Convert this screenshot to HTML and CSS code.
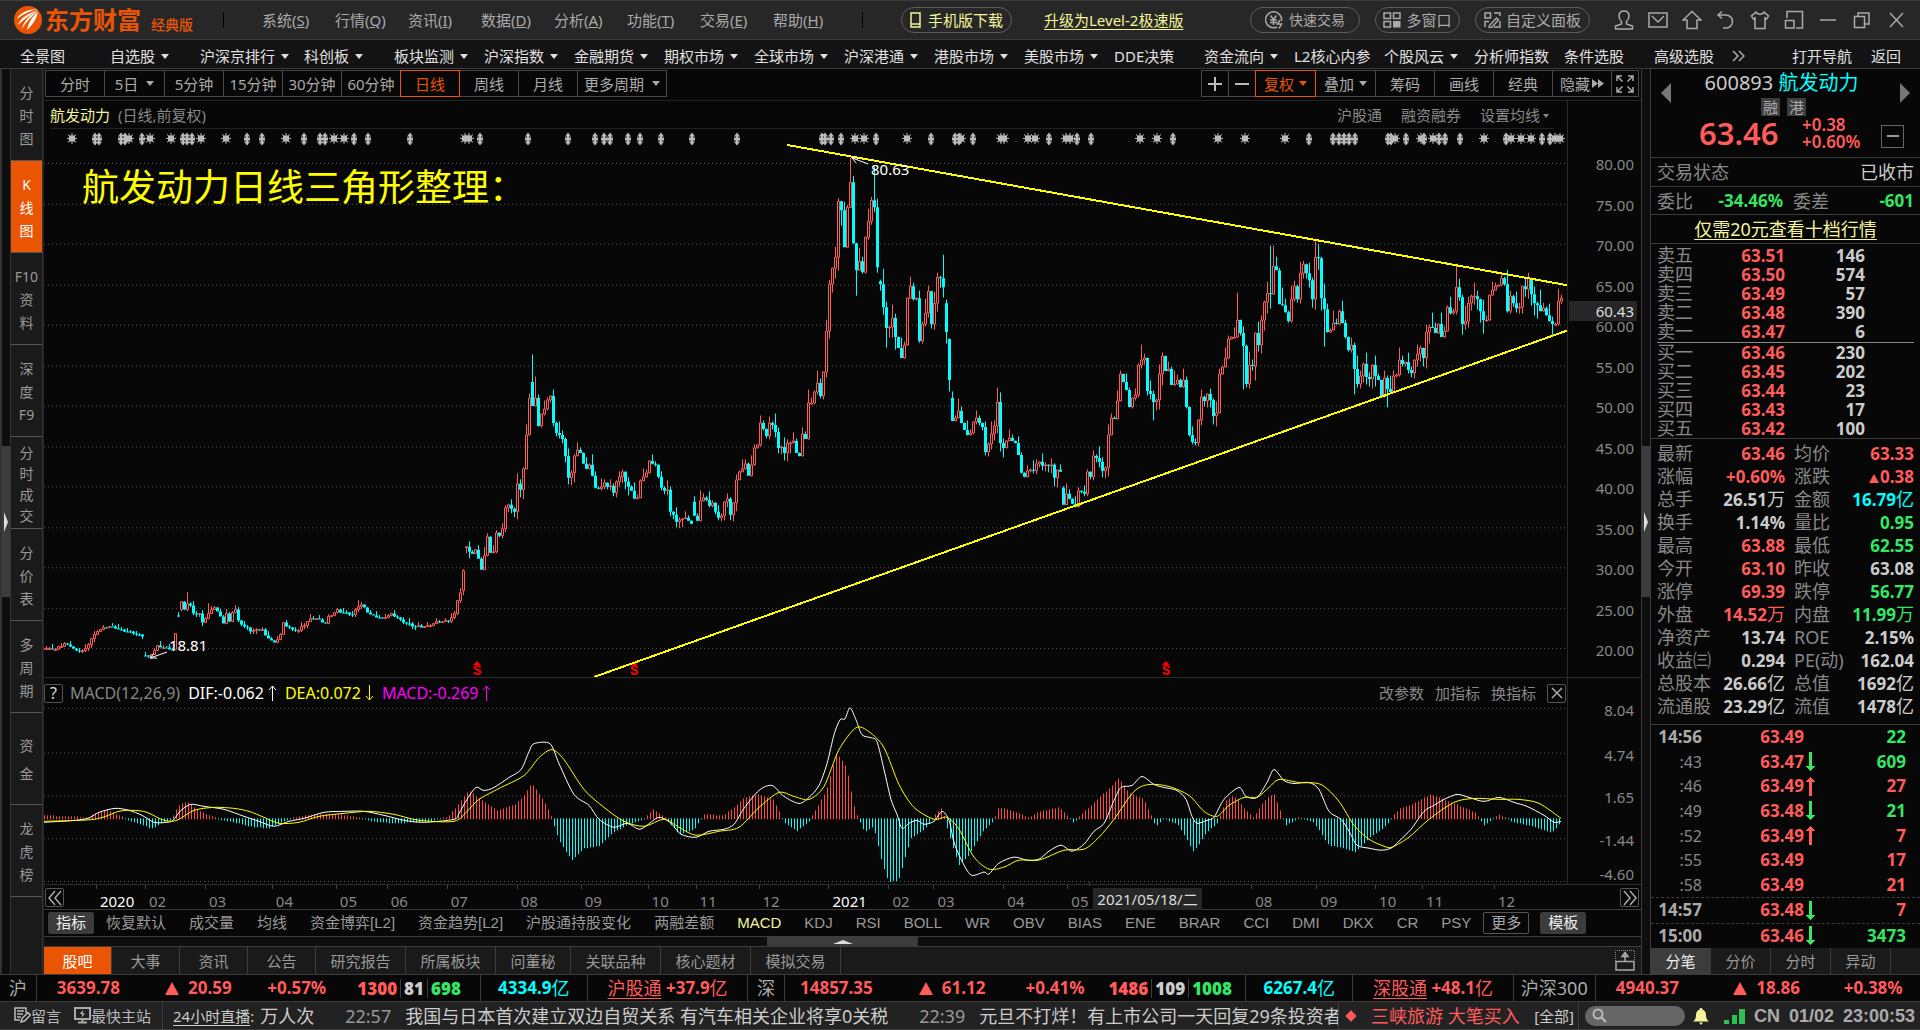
FILE: index.html
```html
<!DOCTYPE html>
<html lang="zh-CN">
<head>
<meta charset="utf-8">
<title>东方财富 经典版</title>
<link rel="stylesheet" href="styles.css">
</head>
<body>
<div class="app">
  <header class="titlebar">
    <div class="brand">
      <svg class="brand-mark" viewBox="0 0 28 28"><circle cx="14" cy="14" r="14" fill="#ea5504"/><path d="M24 3C15 3 5 7 3 13c5-4 12-8 21-10zM24 4C15 7 6 12 4 19c5-5 12-10 20-15zM24 5c-8 4-14 9-16 18 3-6 9-12 16-18zM24 6c-5 4-9 9-11 18 4-4 9-9 11-18z" fill="#fff"/></svg>
      <strong class="brand-name">东方财富</strong><span class="brand-edition">经典版</span>
    </div>
    <i class="bar-divider"></i>
    <div class="menus">
      <button>系统(<u>S</u>)</button><button>行情(<u>Q</u>)</button><button>资讯(<u>I</u>)</button><button>数据(<u>D</u>)</button><button>分析(<u>A</u>)</button><button>功能(<u>T</u>)</button><button>交易(<u>E</u>)</button><button>帮助(<u>H</u>)</button>
    </div>
    <i class="bar-divider"></i>
    <button class="pill pill-mobile"><svg width="11" height="16" viewBox="0 0 11 16"><path d="M1 1h9v14H1zM1 12h9" class="ln"/></svg>手机版下载</button>
    <a class="upgrade" href="#">升级为Level-2极速版</a>
    <div class="pills">
      <button class="pill w110"><svg width="19" height="18" viewBox="0 0 19 18"><path d="M12 16A8 8 0 1 1 16.500 10M5.500 4.500l3 4 3-4M5 9h7M5 11.500h7M8.500 8.500V14M15 9l-2.500 4h4L14 17.500" class="ln"/></svg>快速交易</button>
      <button class="pill w85"><svg width="18" height="16" viewBox="0 0 18 16"><path d="M1 1h6.500v5.500H1zM10.500 1H17v5.500h-6.500zM1 9.500h6.500V15H1z" class="ln"/><path d="M10 9h7.500v6.500H10z" fill="#aaa"/></svg>多窗口</button>
      <button class="pill w115"><svg width="17" height="16" viewBox="0 0 17 16"><path d="M6.500 6H1V1h5.500zM10 1h6v3M1 15V9.500h4M10 15h6V9M5.500 13.500l7-7.500 2 2-7 7.500-2.500.500z" class="ln"/></svg>自定义面板</button>
    </div>
    <div class="window-tools">
      <button aria-label="用户"><svg viewBox="0 0 20 20"><path d="M10 1c-3 0-5 2-5 5 0 2 1 4 2.500 5.500V14L1.500 16v3h17v-3L12.500 14v-2.500C14 10 15 8 15 6c0-3-2-5-5-5z" class="ln"/></svg></button>
      <button aria-label="邮件"><svg viewBox="0 0 20 20"><path d="M1 3h18v14H1zM4 6l6 6 6-6" class="ln"/></svg></button>
      <button aria-label="主页"><svg viewBox="0 0 20 20"><path d="M10 1.500L1 10h4v8.500h10V10h4z" class="ln"/></svg></button>
      <button aria-label="撤销"><svg viewBox="0 0 20 20"><path d="M6 1.500L2 5l4 3.500M2 5h8a6.500 6.500 0 0 1 0 13H7" class="ln"/></svg></button>
      <button aria-label="皮肤"><svg viewBox="0 0 20 20"><path d="M6 2L1.500 6l2 3L5 8v10.500h10V8l1.500 1 2-3L14 2c-1 3-7 3-8 0z" class="ln"/></svg></button>
      <button aria-label="布局"><svg viewBox="0 0 20 20"><path d="M3 8V1.500h15.500V18H12M1.500 10.500H10V18H1.500z" class="ln"/></svg></button>
      <button aria-label="最小化"><svg viewBox="0 0 20 20"><path d="M2 10h16" class="ln"/></svg></button>
      <button aria-label="还原"><svg viewBox="0 0 20 20"><path d="M2.500 6.500h10v11h-10zM6 6V3h11v11h-4" class="ln"/></svg></button>
      <button aria-label="关闭"><svg viewBox="0 0 20 20"><path d="M4 3l13 14M17 3L4 17" class="ln"/></svg></button>
    </div>
  </header>

  <nav class="mainnav">
    <a href="#">全景图</a><a href="#" class="dd">自选股</a><a href="#" class="dd wide">沪深京排行</a><a href="#" class="dd">科创板</a><a href="#" class="dd">板块监测</a><a href="#" class="dd">沪深指数</a><a href="#" class="dd">金融期货</a><a href="#" class="dd">期权市场</a><a href="#" class="dd">全球市场</a><a href="#" class="dd">沪深港通</a><a href="#" class="dd">港股市场</a><a href="#" class="dd">美股市场</a><a href="#">DDE决策</a><a href="#" class="dd">资金流向</a><a href="#">L2核心内参</a><a href="#" class="dd">个股风云</a><a href="#">分析师指数</a><a href="#">条件选股</a><a href="#">高级选股</a>
    <svg class="more" width="13" height="12" viewBox="0 0 13 12"><path d="M1 1l5 5-5 5M7 1l5 5-5 5" class="ln"/></svg>
    <a href="#" class="open">打开导航</a><a href="#" class="back">返回</a>
  </nav>

  <main class="workspace">
    <div class="gutter gutter-left"><button class="grip" aria-label="展开左侧"></button></div>
    <aside class="sidebar">
      <button><span>分</span><span>时</span><span>图</span></button>
      <button class="on"><span>K</span><span>线</span><span>图</span></button>
      <button><span>F10</span><span>资</span><span>料</span></button>
      <button><span>深</span><span>度</span><span>F9</span></button>
      <button class="four"><span>分</span><span>时</span><span>成</span><span>交</span></button>
      <button><span>分</span><span>价</span><span>表</span></button>
      <button><span>多</span><span>周</span><span>期</span></button>
      <button class="two"><span>资</span><span>金</span></button>
      <button><span>龙</span><span>虎</span><span>榜</span></button>
    </aside>

    <section class="center">
      <div class="toolbar">
        <div class="btn-group periods">
          <button>分时</button><button class="dd">5日</button><button>5分钟</button><button>15分钟</button><button>30分钟</button><button>60分钟</button><button class="on">日线</button><button>周线</button><button>月线</button><button class="dd w-more">更多周期</button>
        </div>
        <div class="btn-group">
          <button class="sq" aria-label="放大"><svg width="16" height="16" viewBox="0 0 16 16"><path d="M8 1v14M1 8h14" stroke="#bbb" stroke-width="2"/></svg></button><button class="sq" aria-label="缩小"><svg width="16" height="16" viewBox="0 0 16 16"><path d="M1 8h14" stroke="#bbb" stroke-width="2"/></svg></button><button class="dd on">复权</button><button class="dd">叠加</button><button>筹码</button><button>画线</button><button>经典</button><button>隐藏<svg class="ff" width="12" height="9" viewBox="0 0 12 9"><path d="M0 0l6 4.500L0 9zM6 0l6 4.500L6 9z" fill="#aaa"/></svg></button><button class="sq" aria-label="全屏"><svg width="18" height="18" viewBox="0 0 18 18"><path d="M6 1H1v5M1 1l5.500 5.500M12 1h5v5M17 1l-5.500 5.500M1 12v5h5M1 17l5.500-5.500M17 12v5h-5M17 17l-5.500-5.500" class="ln"/></svg></button>
        </div>
      </div>

      <div class="panel price-panel">
        <div class="plot">
          <div class="plot-head">
            <div><b>航发动力</b><span class="paren">(日线,前复权)</span></div>
            <div class="plot-links"><a href="#">沪股通</a><a href="#">融资融券</a><a href="#" class="dd">设置均线</a></div>
          </div>
          <svg class="canvas" id="price" viewBox="45 101 1523 577" preserveAspectRatio="none"></svg>
          <span class="note title-note" style="left:2.500%;top:10.500%">航发动力日线三角形整理：</span>
          <span class="note" style="left:54.300%;top:10%">80.63</span>
          <span class="note" style="left:8.200%;top:92.700%">18.81</span>
        </div>
        <div class="scale" id="priceScale"></div>
      </div>

      <div class="panel macd-panel">
        <div class="plot">
          <div class="macd-head">
            <button class="box" aria-label="帮助">?</button>
            <span class="macd-name">MACD(12,26,9)</span>
            <span class="c-white">DIF:-0.062<svg width="9" height="16" viewBox="0 0 9 16"><path d="M4.500 16V1M1 5l3.500-4L8 5" class="cur"/></svg></span>
            <span class="c-yellow">DEA:0.072<svg width="9" height="16" viewBox="0 0 9 16"><path d="M4.500 0v15M1 11l3.500 4L8 11" class="cur"/></svg></span>
            <span class="c-magenta">MACD:-0.269<svg width="9" height="16" viewBox="0 0 9 16"><path d="M4.500 16V1M1 5l3.500-4L8 5" class="cur"/></svg></span>
            <div class="macd-links"><a href="#">改参数</a><a href="#">加指标</a><a href="#">换指标</a><button class="box" aria-label="关闭指标"><svg width="12" height="12" viewBox="0 0 12 12"><path d="M1 1l10 10M11 1L1 11" class="ln"/></svg></button></div>
          </div>
          <svg class="canvas" id="macd" viewBox="45 678 1523 207" preserveAspectRatio="none"></svg>
        </div>
        <div class="scale" id="macdScale"></div>
      </div>

      <div class="timeline">
        <button class="box" aria-label="向前"><svg width="14" height="16" viewBox="0 0 14 16"><path d="M7 1L1 8l6 7M13 1L7 8l6 7" class="ln"/></svg></button>
        <div class="dates" id="dates"></div>
        <button class="box" aria-label="向后"><svg width="14" height="16" viewBox="0 0 14 16"><path d="M1 1l6 7-6 7M7 1l6 7-6 7" class="ln"/></svg></button>
      </div>

      <div class="indicators">
        <button class="solid">指标</button>
        <a href="#">恢复默认</a><a href="#">成交量</a><a href="#">均线</a><a href="#">资金博弈[L2]</a><a href="#">资金趋势[L2]</a><a href="#">沪股通持股变化</a><a href="#">两融差额</a><a href="#" class="on">MACD</a><a href="#">KDJ</a><a href="#">RSI</a><a href="#">BOLL</a><a href="#">WR</a><a href="#">OBV</a><a href="#">BIAS</a><a href="#">ENE</a><a href="#">BRAR</a><a href="#">CCI</a><a href="#">DMI</a><a href="#">DKX</a><a href="#">CR</a><a href="#">PSY</a>
        <button class="outline">更多</button><button class="solid">模板</button>
      </div>
      <div class="hsplit"><button class="hgrip" aria-label="展开下方"></button></div>
      <div class="tabs">
        <button class="on">股吧</button><button>大事</button><button>资讯</button><button>公告</button><button class="t4">研究报告</button><button class="t4">所属板块</button><button class="t3">问董秘</button><button class="t4">关联品种</button><button class="t4">核心题材</button><button class="t4">模拟交易</button>
        <button class="dock" aria-label="展开面板"><svg width="20" height="21" viewBox="0 0 20 21"><path d="M1 11.500h18V20H1z" class="ln"/><path d="M.500 11V.500h19V11" fill="none" stroke="#888" stroke-dasharray="1 1"/><path d="M10 12V3M7 6.500l3-4 3 4z" class="ln"/></svg></button>
      </div>
    </section>

    <div class="gutter gutter-right"><button class="grip" aria-label="收起右侧"></button></div>

    <aside class="quote">
      <div class="quote-head">
        <button class="prev" aria-label="上一只"></button>
        <div class="name">600893 <em>航发动力</em></div>
        <div class="badges"><span>融</span><span>港</span></div>
        <button class="next" aria-label="下一只"></button>
      </div>
      <div class="quote-price">
        <span class="last">63.46</span>
        <span class="chg">+0.38<br>+0.60%</span>
        <button class="minus" aria-label="移出自选"></button>
      </div>
      <div class="line-row"><span>交易状态</span><span class="state">已收市</span></div>
      <div class="line-row ratio"><span>委比</span><b class="g">-34.46%</b><span>委差</span><b class="g">-601</b></div>
      <div class="line-row promo"><a href="#">仅需20元查看十档行情</a></div>
      <table class="orders"><tbody>
        <tr><th>卖五</th><td class="r">63.51</td><td>146</td><td></td></tr>
        <tr><th>卖四</th><td class="r">63.50</td><td>574</td><td></td></tr>
        <tr><th>卖三</th><td class="r">63.49</td><td>57</td><td></td></tr>
        <tr><th>卖二</th><td class="r">63.48</td><td>390</td><td></td></tr>
        <tr><th>卖一</th><td class="r">63.47</td><td>6</td><td></td></tr>
      </tbody></table>
      <hr>
      <table class="orders buys"><tbody>
        <tr><th>买一</th><td class="r">63.46</td><td>230</td><td></td></tr>
        <tr><th>买二</th><td class="r">63.45</td><td>202</td><td></td></tr>
        <tr><th>买三</th><td class="r">63.44</td><td>23</td><td></td></tr>
        <tr><th>买四</th><td class="r">63.43</td><td>17</td><td></td></tr>
        <tr><th>买五</th><td class="r">63.42</td><td>100</td><td></td></tr>
      </tbody></table>
      <table class="stats"><tbody>
        <tr><th>最新</th><td class="r">63.46</td><th>均价</th><td class="r">63.33</td></tr>
        <tr><th>涨幅</th><td class="r">+0.60%</td><th>涨跌</th><td class="r"><i class="tri small"></i>0.38</td></tr>
        <tr><th>总手</th><td>26.51<span>万</span></td><th>金额</th><td class="c">16.79<span>亿</span></td></tr>
        <tr><th>换手</th><td>1.14%</td><th>量比</th><td class="g">0.95</td></tr>
        <tr><th>最高</th><td class="r">63.88</td><th>最低</th><td class="g">62.55</td></tr>
        <tr><th>今开</th><td class="r">63.10</td><th>昨收</th><td>63.08</td></tr>
        <tr><th>涨停</th><td class="r">69.39</td><th>跌停</th><td class="g">56.77</td></tr>
        <tr><th>外盘</th><td class="r">14.52<span>万</span></td><th>内盘</th><td class="g">11.99<span>万</span></td></tr>
        <tr><th>净资产</th><td>13.74</td><th>ROE</th><td>2.15%</td></tr>
        <tr><th>收益㈢</th><td>0.294</td><th>PE(动)</th><td>162.04</td></tr>
        <tr><th>总股本</th><td>26.66<span>亿</span></td><th>总值</th><td>1692<span>亿</span></td></tr>
        <tr><th>流通股</th><td>23.29<span>亿</span></td><th>流值</th><td>1478<span>亿</span></td></tr>
      </tbody></table>
      <div class="ticks">
        <div><b>14:56</b><span class="p">63.49</span><i></i><span class="v g">22</span></div>
        <div><em>:43</em><span class="p">63.47</span><i class="dn"></i><span class="v g">609</span></div>
        <div><em>:46</em><span class="p">63.49</span><i class="up"></i><span class="v r">27</span></div>
        <div><em>:49</em><span class="p">63.48</span><i class="dn"></i><span class="v g">21</span></div>
        <div><em>:52</em><span class="p">63.49</span><i class="up"></i><span class="v r">7</span></div>
        <div><em>:55</em><span class="p">63.49</span><i></i><span class="v r">17</span></div>
        <div><em>:58</em><span class="p">63.49</span><i></i><span class="v r">21</span></div>
        <div class="sep"><b>14:57</b><span class="p">63.48</span><i class="dn"></i><span class="v r">7</span></div>
        <div class="sep"><b>15:00</b><span class="p">63.46</span><i class="dn"></i><span class="v g">3473</span></div>
      </div>
      <div class="quote-tabs"><button class="on">分笔</button><button>分价</button><button>分时</button><button>异动</button></div>
    </aside>
  </main>

  <section class="indexbar">
    <div class="cell short">沪</div>
    <div class="cell idx r"><span>3639.78</span><span><i class="tri"></i>20.59</span><span>+0.57%</span><span class="counts"><b class="r">1300</b><b class="w">81</b><b class="g">698</b></span></div>
    <div class="cell amt c">4334.9<span>亿</span></div>
    <div class="cell flow r"><a href="#">沪股通</a>&nbsp;+37.9<span>亿</span></div>
    <div class="cell short">深</div>
    <div class="cell idx sz r"><span>14857.35</span><span><i class="tri"></i>61.12</span><span>+0.41%</span><span class="counts"><b class="r">1486</b><b class="w">109</b><b class="g">1008</b></span></div>
    <div class="cell amt c">6267.4<span>亿</span></div>
    <div class="cell flow r"><a href="#">深股通</a>&nbsp;+48.1<span>亿</span></div>
    <div class="cell hs">沪深300</div>
    <div class="cell idx last3 r"><span>4940.37</span><span><i class="tri"></i>18.86</span><span>+0.38%</span></div>
  </section>

  <footer class="statusbar">
    <div class="quick">
      <a href="#"><svg width="17" height="17" viewBox="0 0 17 17"><path d="M12 6V1H1v12h5M3 4h7M3 7h6M3 10h4M7 15l1-3.500 6-6 2.500 2.500-6 6z" fill="none" stroke="#bbb" stroke-width="1.500"/></svg>留言</a>
      <a href="#"><svg width="17" height="17" viewBox="0 0 17 17"><path d="M1 1h15v11H1zM8.500 12v3M4 15.500h9" fill="none" stroke="#aaa" stroke-width="2"/><path d="M9 3L6 7h2.500L7.500 10.500 11 6.500H8.500z" fill="#ccc"/></svg>最快主站</a>
    </div>
    <div class="news">
      <a class="live" href="#">24小时直播</a><span class="colon">:</span>
      <span class="frag">万人次</span>
      <time>22:57</time><a class="item first" href="#">我国与日本首次建立双边自贸关系 有汽车相关企业将享0关税</a>
      <time>22:39</time><a class="item" href="#">元旦不打烊！有上市公司一天回复29条投资者提问</a>
    </div>
    <div class="alerts"><i class="diamond"></i><a class="hot" href="#">三峡旅游 大笔买入</a><a class="all" href="#">[全部]</a></div>
    <div class="tray">
      <label class="search"><svg width="15" height="15" viewBox="0 0 15 15"><circle cx="6" cy="6" r="4.500" fill="none" stroke="#bbb" stroke-width="2"/><path d="M9.500 9.500L14 14" stroke="#bbb" stroke-width="2"/></svg><input type="text" aria-label="搜索"></label>
      <svg width="18" height="18" viewBox="0 0 18 18"><path d="M9 1c1 0 1.500.700 1.500 1.500C13 3.500 14 5.500 14 8c0 3 1 5 3 6.500H1C3 13 4 11 4 8c0-2.500 1-4.500 3.500-5.500C7.500 1.700 8 1 9 1zM7 15.500h4L9 18z" fill="#f4f49a"/></svg>
      <svg width="21" height="16" viewBox="0 0 21 16"><path d="M0 12h5v4H0zM8 7h5v9H8zM15 1h6v15h-6z" fill="#2fbf55"/></svg>
      <b>CN</b><b>01/02</b><b>23:00:53</b>
    </div>
  </footer>
</div>
<script src="chart.js"></script>
</body>
</html>
```
FILE: styles.css
```css
* { box-sizing: border-box; }
body {
  margin: 0;
  background: #070707;
  color: #aaa;
  font: 15px/20px "Noto Sans", "Noto Sans CJK SC", sans-serif;
}
button {
  margin: 0; padding: 0; border: 0; background: none;
  color: inherit; font: inherit; white-space: nowrap;
}
a { color: inherit; text-decoration: none; white-space: nowrap; }
em, i { font-style: normal; }
svg { flex: none; }
.ln { fill: none; stroke: #aaa; stroke-width: 1.500; }
.cur { fill: none; stroke: currentColor; }
.r { color: #ff5b5b; }
.g { color: #35e665; }
.c { color: #00ffff; }
.w { color: #ccc; }
.dd::after {
  content: ""; display: inline-block; margin-left: 8px; vertical-align: 3px;
  border: 4px solid transparent; border-top: 5px solid currentColor; border-bottom: 0;
}

.app { min-height: 100vh; display: flex; flex-direction: column; overflow: hidden; }

/* title bar */
.titlebar {
  height: 40px; flex: none; display: flex; align-items: center;
  background: #272727; border-top: 1px solid #3c3c3c; border-bottom: 1px solid #3c3c3c;
  padding: 0 14px;
}
.brand { display: flex; align-items: center; width: 209px; color: #ea5504; white-space: nowrap; }
.brand-mark { width: 28px; height: 28px; margin-right: 3px; }
.brand-name { font-size: 24px; font-weight: 700; }
.brand-edition { font-size: 14px; margin: 10px 0 0 10px; font-weight: 500; }
.bar-divider { width: 1px; height: 16px; background: #000; }
.menus { display: flex; width: 638px; padding-left: 38px; }
.menus button { width: 73px; text-align: left; }
.pill {
  height: 26px; border: 1px solid #5c5c5c; border-radius: 13px;
  display: flex; align-items: center; justify-content: center; gap: 5px;
}
.pill-mobile { width: 111px; margin-left: 38px; color: #f4f49a; gap: 7px; }
.pill-mobile .ln { stroke: #f4f49a; }
.upgrade { margin-left: 32px; color: #f4f49a; text-decoration: underline; text-underline-offset: 3px; }
.pills { display: flex; gap: 15px; margin-left: auto; }
.w110 { width: 110px; } .w85 { width: 85px; } .w115 { width: 115px; }
.pills .pill { font-size: 14px; }
.pills .w115, .pills .w85 { font-size: 15px; }
.window-tools { display: flex; gap: 14px; margin-left: 24px; }
.window-tools svg { width: 20px; height: 20px; display: block; }

/* main navigation */
.mainnav {
  height: 29px; flex: none; display: flex; align-items: center;
  padding: 4px 9px 0 20px; background: #131313; border-bottom: 1px solid #3c3c3c; color: #e0e0e0;
}
.mainnav a { width: 90px; flex: 0 1 auto; }
.mainnav a.wide { width: 104px; }
.mainnav .dd::after { margin-left: 6px; }
.mainnav .more { margin-left: -12px; }
.mainnav .open { width: auto; margin-left: auto; }
.mainnav .back { width: 40px; margin-left: 19px; }

/* workspace */
.workspace { flex: 1; display: grid; grid-template-columns: 11px 32px minmax(0, 1fr) 9px 270px; }
.gutter { background: #0e0e0e; display: flex; align-items: center; }
.gutter-left { border-left: 2px solid #333; border-right: 1px solid #333; }
.gutter-right { border-left: 1px solid #3c3c3c; }
.grip { width: 100%; height: 151px; background: #3c3c3c; display: flex; align-items: center; justify-content: center; }
.grip::before { content: ""; border: 10px solid transparent; border-left: 4px solid #ddd; border-right: 0; }
.sidebar { background: #1a1a1a; display: flex; flex-direction: column; color: #999; border-right: 1px solid #333; }
.sidebar button {
  height: 92px; border-bottom: 1px solid #555; font-size: 14px; line-height: 23px;
  display: flex; flex-direction: column; align-items: center; justify-content: center; padding-top: 2px;
}
.sidebar .on { background: #ea5504; color: #fff; }
.sidebar .four { line-height: 21px; }
.sidebar .two { line-height: 28px; }

.center { display: flex; flex-direction: column; border-left: 1px solid #222; }
.toolbar { height: 32px; flex: none; display: flex; justify-content: space-between; padding: 1px 3px 3px 1px; border-bottom: 1px solid #222; }
.btn-group { display: flex; }
.btn-group button {
  width: 60px; margin-right: -1px; border: 1px solid #484848;
  display: flex; align-items: center; justify-content: center;
}
.btn-group .dd { width: 61px; }
.btn-group .w-more { width: 90px; }
.btn-group .sq { width: 28px; }
.btn-group .on { color: #ea5504; border-color: #ea5504; position: relative; }
.btn-group .ff { margin-left: 2px; }
.btn-group .dd::after { margin-left: 5px; }
.periods .dd::after { margin-left: 8px; }

.panel { display: grid; grid-template-columns: minmax(0, 1fr) 73px; min-height: 100px; }
.price-panel { flex: 577 1 0; }
.macd-panel { flex: 207 1 0; }
.plot { position: relative; border-right: 1px solid #2a2a2a; border-bottom: 1px solid #2a2a2a; }
.canvas { position: absolute; inset: 0; width: 100%; height: 100%; }
.scale { position: relative; border-bottom: 1px solid #2a2a2a; color: #888; }
.scale span { position: absolute; right: 7px; transform: translateY(-50%); }
.scale .cross { right: 4px; left: 1px; padding: 0 3px; background: #262626; color: #ddd; text-align: right; }
.plot-head {
  height: 28px; margin: 0 13px 0 6px; border-bottom: 1px solid #222;
  display: flex; justify-content: space-between; align-items: center; color: #888;
}
.plot-head b { font-weight: 400; color: #f4f49a; }
.plot-head .paren { margin-left: 8px; }
.plot-links { display: flex; gap: 19px; position: relative; z-index: 1; padding-right: 5px; }
.plot-links .dd::after { margin-left: 3px; border-width: 4px 3px 0; }
.note { position: absolute; color: #fff; white-space: nowrap; line-height: 20px; }
.title-note { font-size: 37px; line-height: 52px; color: #ff0; }
.macd-head { height: 30px; display: flex; align-items: center; gap: 8px; position: relative; z-index: 1; color: #888; white-space: nowrap; font-size: 16px; }
.macd-head svg { margin-left: 4px; vertical-align: -2px; }
.macd-name { margin-left: -1px; }
.macd-links { margin-left: auto; display: flex; gap: 11px; align-items: center; padding-right: 1px; font-size: 15px; }
.box { width: 19px; height: 19px; border: 1px solid #555; border-radius: 2px; color: #ddd; display: flex; align-items: center; justify-content: center; }
.macd-links .box svg { margin: 0; }
.c-white { color: #fff; } .c-yellow { color: #ff0; } .c-magenta { color: #f0f; }

.timeline { height: 25px; flex: none; display: flex; justify-content: space-between; padding: 3px 2px 0 1px; position: relative; border-bottom: 1px solid #3c3c3c; }
.dates { position: absolute; inset: 0 74px 0 1px; color: #888; }
.dates span { position: absolute; top: 6px; line-height: 20px; }
.dates span::before { content: ""; position: absolute; left: -4px; top: -6px; height: 4px; border-left: 1px solid #444; }
.dates .year { color: #fff; }
.dates .cursor { top: 3px; padding: 1px 4px; background: #262626; color: #ddd; white-space: nowrap; }
.timeline .box { position: relative; z-index: 1; }

.indicators { height: 27px; flex: none; display: flex; align-items: center; gap: 23px; padding-left: 4px; border-bottom: 1px solid #3c3c3c; color: #999; font-family: "Liberation Sans", "Noto Sans CJK SC", sans-serif; }
.indicators .on { color: #f4f49a; }
.indicators button { width: 46px; height: 22px; border: 1px solid #555; border-radius: 2px; color: #aaa; }
.indicators .solid { background: #3c3c3c; border-color: #3c3c3c; color: #eee; }
.indicators .solid:first-child { margin-right: -11px; }
.indicators .outline { margin: 0 -12px 0 -11px; }

.hsplit { height: 9px; flex: none; display: flex; justify-content: center; background: #0e0e0e; }
.hgrip { width: 151px; background: #3c3c3c; display: flex; align-items: center; justify-content: center; }
.hgrip::before { content: ""; border: 10px solid transparent; border-bottom: 4px solid #ddd; border-top: 0; }
.tabs { height: 28px; flex: none; display: flex; background: #1a1a1a; color: #999; border-top: 1px solid #3c3c3c; }
.tabs button { width: 68px; border-right: 1px solid #3c3c3c; }
.tabs .t3 { width: 75px; } .tabs .t4 { width: 90px; }
.tabs .on { background: #ea5504; color: #fff; }
.tabs .dock { width: 20px; border: 0; margin: 0 6px 0 auto; display: flex; align-items: center; }

/* quote panel */
.quote { border-left: 1px solid #3c3c3c; display: flex; flex-direction: column; color: #888; font-size: 18px; }
.quote b, .quote td { font-weight: 700; }
.quote-head { display: grid; grid-template: 28px 20px / 20px 1fr 20px; padding: 0 5px; justify-items: center; align-items: center; flex: none; }
.quote-head button { grid-row: 1 / 3; border: 10px solid transparent; }
.quote-head .prev { grid-column: 1; border-right-color: #777; border-left: 0; }
.quote-head .next { grid-column: 3; border-left-color: #777; border-right: 0; }
.quote-head .name { grid-area: 1 / 2; font-size: 20px; color: #ccc; padding-right: 8px; }
.quote-head .name em { color: #00ffff; }
.quote-head .badges { grid-area: 2 / 2; display: flex; gap: 7px; font-size: 15px; padding-right: 4px; }
.badges span { width: 19px; height: 18px; line-height: 18px; background: #3c3c3c; color: #aaa; text-align: center; }
.quote-price { height: 40px; flex: none; display: flex; align-items: center; padding: 0 16px 8px 48px; color: #ff5b5b; }
.quote-price .last { font-size: 31px; line-height: 32px; font-weight: 600; width: 103px; }
.quote-price .chg { font-size: 17px; line-height: 17px; font-weight: 600; }
.minus { width: 23px; height: 23px; border: 1px solid #666; margin: 6px 0 0 auto; display: grid; place-items: center; }
.minus::before { content: ""; width: 12px; height: 2px; background: #999; }
.line-row { height: 29px; flex: none; border-top: 1px solid #3c3c3c; display: flex; align-items: center; justify-content: space-between; padding: 0 6px; }
.line-row .state { color: #ccc; }
.line-row b { font-size: 17px; }
.ratio { height: 28px; display: grid; grid-template-columns: 40px 86px 56px 1fr; }
.ratio b { text-align: right; }
.ratio span:nth-of-type(2) { padding-left: 10px; }
.promo { justify-content: center; border-bottom: 1px solid #3c3c3c; height: 30px; }
.promo a { color: #f4f49a; text-decoration: underline; text-underline-offset: 3px; }
.quote table { border-collapse: collapse; width: 100%; table-layout: fixed; flex: none; }
.quote th { font-weight: 400; text-align: left; padding: 0 0 0 6px; white-space: nowrap; }
.quote td { font-size: 17px; text-align: right; padding: 0; color: #ccc; white-space: nowrap; }
.quote td.r { color: #ff5b5b; } .quote td.g { color: #35e665; } .quote td.c { color: #00ffff; }
.quote td span { font-weight: 400; font-size: 18px; }
.orders { margin-top: 2px; }
.orders tr { height: 19px; line-height: 19px; }
.orders th { width: 60px; }
.orders td:nth-child(2) { width: 74px; }
.orders td:nth-child(3) { width: 80px; }
.quote hr { margin: 1px 6px 0; border: 0; border-top: 1px solid #888; width: auto; align-self: stretch; }
.buys { margin-top: 0; border-bottom: 1px solid #3c3c3c; }
.stats { margin-top: 3px; }
.stats tr { height: 23px; line-height: 23px; }
.stats th { width: 62px; }
.stats td { width: 72px; }
.stats th:nth-child(3) { padding-left: 9px; width: 65px; }
.quote .stats td:nth-child(4) { padding-right: 6px; width: 70px; }
.tri { display: inline-block; border: 7px solid transparent; border-top: 0; border-bottom: 13px solid currentColor; margin-right: 9px; vertical-align: -1px; }
.tri.small { border-width: 0 5px 9px; margin-right: 1px; vertical-align: 0; }
.ticks { flex: 1; display: flex; flex-direction: column; border-top: 1px solid #3c3c3c; margin-top: 6px; font-size: 17px; }
.ticks div { flex: 1; display: grid; grid-template-columns: 45px 102px 16px 1fr; padding: 0 14px 0 6px; align-items: center; font-weight: 700; text-align: right; }
.ticks b { color: #aaa; }
.ticks em { color: #888; font-weight: 400; font-size: 16px; }
.ticks .p { color: #ff5b5b; }
.ticks .sep { border-top: 1px dashed #3c3c3c; }
.ticks i { height: 19px; width: 9px; margin-left: 2px; }
.ticks .dn { background: linear-gradient(#35e665, #35e665) center top / 3px 15px no-repeat, conic-gradient(from -45deg at 50% 100%, #35e665 90deg, transparent 0) center bottom / 9px 5px no-repeat; }
.ticks .up { background: linear-gradient(#ff5b5b, #ff5b5b) center bottom / 3px 15px no-repeat, conic-gradient(from 135deg at 50% 0, #ff5b5b 90deg, transparent 0) center top / 9px 5px no-repeat; }
.quote-tabs { height: 26px; flex: none; display: flex; background: #1a1a1a; font-size: 15px; color: #999; }
.quote-tabs button { width: 60px; border-right: 1px solid #3c3c3c; }
.quote-tabs .on { background: #3c3c3c; color: #eee; }

/* index strip */
.indexbar { height: 28px; flex: none; display: flex; border-top: 1px solid #3c3c3c; border-bottom: 1px solid #3c3c3c; font-size: 17px; font-weight: 700; white-space: nowrap; }
.cell { display: flex; align-items: center; justify-content: center; border-right: 1px solid #3c3c3c; }
.cell.amt span, .cell.flow span, .cell a, .short, .hs { font-weight: 400; font-size: 18px; }
.short, .hs { color: #aaa; }
.short { flex: 37 1 0; }
.amt { flex: 110 1 0; }
.flow { flex: 165 1 0; }
.flow a { text-decoration: underline; text-underline-offset: 3px; }
.hs { flex: 84 1 0; }
.cell.idx { flex: 438 1 0; min-width: 0; display: grid; grid-template-columns: 107fr 101fr 89fr 121fr; padding-left: 20px; justify-content: stretch; }
.cell.sz { flex: 461 1 0; grid-template-columns: 119fr 107fr 83fr 137fr; padding-left: 15px; }
.cell.last3 { flex: 315 1 0; grid-template-columns: 114fr 107fr 74fr; border: 0; }
.counts { display: flex; }
.counts b { padding: 0 3px; border-right: 1px solid #3c3c3c; line-height: 19px; }
.counts b:first-child { padding-left: 0; } .counts b:last-child { border: 0; }

/* status bar */
.statusbar { height: 28px; flex: none; display: flex; background: #222; border-bottom: 1px solid #3c3c3c; color: #ccc; white-space: nowrap; }
.statusbar > div { display: flex; align-items: center; }
.quick { width: 163px; border-right: 1px solid #3c3c3c; padding-left: 14px; gap: 13px; color: #bbb; flex: none; }
.quick a { display: flex; align-items: center; }
.news { flex: 1; min-width: 0; overflow: hidden; padding-left: 10px; font-size: 18px; }
.news .live { font-size: 15px; text-decoration: underline; text-underline-offset: 3px; }
.news .colon { font-size: 15px; margin-right: 6px; }
.news .frag { margin-right: 31px; }
.news time { color: #999; margin-right: 14px; }
.news .first { margin-right: 31px; }
.alerts { width: 241px; border-left: 1px solid #3c3c3c; border-right: 1px solid #3c3c3c; flex: none; padding: 0 4px 0 8px; }
.diamond { width: 8px; height: 8px; background: #ff5b5b; transform: rotate(45deg); margin-right: 16px; }
.alerts .hot { color: #ff5b5b; font-size: 18px; }
.alerts .all { margin-left: auto; }
.tray { width: 341px; flex: none; padding-left: 6px; color: #aaa; font: 18px/20px "Liberation Sans", "Noto Sans CJK SC", sans-serif; }
.search { width: 100px; height: 20px; border-radius: 10px; background: #666; display: flex; align-items: center; padding-left: 7px; margin-right: 7px; flex: none; }
.search input { width: 60px; border: 0; background: none; color: #eee; outline: 0; }
.tray > svg + svg { margin: 0 9px 0 14px; }
.tray b { margin-right: 9px; }
.tray b:last-child { margin-right: 0; }
```
FILE: chart.js
```js
const NS = 'http://www.w3.org/2000/svg';
const price = document.getElementById('price');
const macd = document.getElementById('macd');
const add = (host, tag, attrs, text) => {
  const el = document.createElementNS(NS, tag);
  for (const k in attrs) el.setAttribute(k, attrs[k]);
  if (text) el.textContent = text;
  host.appendChild(el);
};
const lerp = (pts, x) => {
  for (let k = 1; k < pts.length; k++) {
    if (x <= pts[k][0]) {
      const [x0, y0] = pts[k - 1], [x1, y1] = pts[k];
      return y0 + (y1 - y0) * (x - x0) / (x1 - x0);
    }
  }
  return pts[pts.length - 1][1];
};
const yOf = p => 163.2 + (80 - p) * 8.1;

// price grid and scale
const scale = (id, top, height, rows) => {
  const host = document.getElementById(id);
  rows.forEach(([label, y, cls]) => {
    const s = document.createElement('span');
    s.textContent = label;
    if (cls) s.className = cls;
    s.style.top = (y - top) / height * 100 + '%';
    host.appendChild(s);
  });
};
const rows = [];
for (let p = 80; p >= 20; p -= 5) {
  const y = Math.round(yOf(p)) + 0.5;
  add(price, 'path', { d: `M45 ${y}H1568`, stroke: '#555', 'stroke-dasharray': '1 3' });
  rows.push([p.toFixed(2), y + 1]);
}
rows.push(['60.43', 311, 'cross']);
scale('priceScale', 101, 577, rows);

// closes: sparse for the quiet first months, then one value a day
const early = [[0,20.1],[4,19.9],[7,20.6],[9,20.3],[11,19.7],[14,19.9],[16,21.2],[18,22.2],[22,22.8],[26,22.3],[29,22],[33,21.6],[34,19.1],[35,18.9],[38,20.3],[40,20.2],[43,19.9],[44,21.8],[45,24.1],[46,25.8],[47,24.8],[48,25.7],[49,25.3],[50,24.3],[52,24.3],[53,23.1],[55,24.4],[57,25.2],[58,24.6],[60,23.2],[61,24.3],[62,23.3],[63,24.6],[64,24.9],[65,23.4],[67,22.8],[69,22.2],[73,22.4],[74,21.6],[77,20.7],[79,21.7],[80,23.1],[83,22.3],[85,22.3],[89,23.7],[91,23.7],[94,23.1],[95,23.9],[98,24.7],[103,24.2],[105,25.3],[106,25.4],[109,24.2],[113,23.7],[116,24.3],[120,23.3],[124,22.7],[128,22.8],[131,23.3],[135,23.4],[137,24.3],[138,26],[139,27]];
const daily = [29.6,32.6,32,31.8,32.3,31.1,29.8,31.5,33.8,31.9,32,34.3,34,34.8,37.4,37.8,37.3,36.9,40.4,39.6,42.3,46.4,51,50,51,47.5,49,49.7,50.8,51.3,47.9,46.7,46.5,46,43.8,41.1,41.7,43.9,44.6,44.2,42.9,42.2,42.7,41.4,39.9,39.8,40,40.5,40,40.1,39.3,40.7,41.2,41.9,40.6,40,39.5,38.5,38.7,40.8,41.3,41.8,43.2,42.9,42.7,41.3,39.9,39.5,39.6,36.9,36.6,35.7,35.9,36.1,36.2,35.8,35.4,36.5,35.8,38.3,38.7,38.4,37.7,38,36.9,36.2,36.4,38.2,38.5,36.6,38.1,40.9,41.9,42.2,42.9,41.4,42.8,44.9,45.2,47.9,47.2,46.3,47.9,47.7,46.8,44.9,45,44.2,45.4,45.5,45.7,44.2,43.8,46.6,46,50.4,50.4,51.7,52.9,51.3,54.2,59.3,65.1,67.1,68.4,75.3,74.2,69.6,74.6,77.7,70.1,66.8,67.9,66.6,70.9,72.9,75.4,74.6,67.2,65.1,62.2,59.6,59.8,60.9,58.5,57.2,55.9,57.6,63.4,64.9,63.2,63.4,58.1,60.2,61.5,64.2,60.2,62.7,66,65.8,64.7,59.1,53.2,48.2,48.6,49.4,47.9,47.1,46.5,46.7,48,48.5,47.9,47.4,44.4,45.3,46.6,47.6,50.5,45.5,44.9,45.7,46.1,45.7,45.4,44,41.8,41.3,42,42.1,42,42.9,43.1,42.6,42.7,42.6,42.7,41.1,42.1,41.9,37.8,39.2,38.5,37.9,37.6,39.5,39.4,39.1,41.9,41.3,43.8,43.6,43.1,42,42.4,46.5,48.6,48.4,50.7,54,53,52,49.9,51,51.4,55.1,55.7,55.9,51.9,51.5,50.5,50.8,54,56.2,54.3,54.6,52.6,52.7,53.2,52.4,53.2,49.9,46.5,45.6,45.5,48.3,51.1,50.7,51.5,50.8,48.8,49.2,54,54.9,55.9,58.3,58.5,58.6,60.7,59,57.4,52.7,55.1,55,59,57.6,60.6,62.9,64,63.8,67.3,66.8,62.6,62.5,61.6,60.5,63.2,64.9,63.2,66.4,67.5,66.5,65.6,63.2,68.4,68.3,63.4,62,59.1,59.4,60.3,60.1,61.8,60.3,58.6,57,57.6,54.6,52.8,53.7,55.2,53.6,53.4,55.1,53.7,53.2,51.1,53.5,52.1,51.7,53.7,53.8,55.7,55.2,55.4,54.5,54.1,55.7,56.5,57.2,56,59.2,59.8,59.6,59,60.1,58.6,59.3,62.3,61.5,61.7,64.7,63.5,60.1,60.5,62.7,63.6,63.6,63.2,61.8,60.6,60.7,63.7,64.3,64.9,65,65.8,65.1,61.8,63.6,62.7,62.1,62.3,64.8,64.5,65.8,63.8,62.7,62.5,61.8,62.1,61.2,60.5,60.1,60.2,63,63.4];
const closes = [];
for (let i = 0; i < 140; i++) closes.push(lerp(early, i) + (i % 3 - 1) * 0.08);
closes.push(...daily);
// sessions that opened away from the previous close
const opens = { 34: 19.2, 45: 24.1, 46: 24.8, 140: 27.2, 141: 32.5, 163: 53, 217: 38.2, 279: 65.4, 301: 62.8, 302: 58.3, 303: 51, 340: 39.9 };
const highs = { 48: 26.9, 55: 25.6, 105: 26, 163: 56.3, 164: 53.6, 269: 80.63, 277: 79.5, 300: 68.7, 318: 52.3 };
const lows = { 34: 19, 35: 18.81, 271: 63.6, 281: 57.2 };
const pitch = 1518 / (closes.length - 1);
// swing points given by their place on the time axis
[[1141,57.5],[1237,64],[1272,69.8],[1275,69.8],[1316,70.4],[1319,70],[1458,67.5],[1503,66.4],[1529,66.5],[1559,64.5]].forEach(([x, p]) => { highs[Math.round((x - 44) / pitch)] = p; });
[[1153,48.2],[1243,52],[1255,53.1],[1325,57.3],[1355,51.4],[1389,49.8],[1464,58.8],[1552,58.8]].forEach(([x, p]) => { lows[Math.round((x - 44) / pitch)] = p; });
let red = '', cyan = '', fill = '';
closes.forEach((c, i) => {
  const o = opens[i] ?? (i ? closes[i - 1] : c);
  const vol = i < 140 ? 0.3 : Math.max(0.4, c * 0.018);
  const n1 = (i * 7919 % 97) / 97, n2 = (i * 5167 % 89) / 89;
  const hi = Math.max(o, c, highs[i] ?? Math.max(o, c) + vol * n1 * n1 * 1.8);
  const lo = Math.min(o, c, lows[i] ?? Math.min(o, c) - vol * n2 * n2 * 1.6);
  const x = Math.round(44 + i * pitch) + 0.5;
  const t = Math.round(yOf(Math.max(o, c))) + 0.5;
  const b = Math.max(t + 1, Math.round(yOf(Math.min(o, c))) + 0.5);
  const h = Math.round(yOf(hi)), l = Math.round(yOf(lo));
  if (c >= o) red += `M${x} ${h}V${t}M${x - 1} ${t}h2V${b}h-2zM${x} ${b}V${l}`;
  else { cyan += `M${x} ${h}V${l}`; fill += `M${x - 1.5} ${t}h3V${b}h-3z`; }
});
add(price, 'path', { d: red, fill: 'none', stroke: '#ff5b5b' });
add(price, 'path', { d: cyan, fill: 'none', stroke: '#00ffff' });
add(price, 'path', { d: fill, fill: '#00ffff' });

// event marks above the candles
const stars = [73,130,151,172,202,227,287,335,345,466,470,856,865,908,962,1002,1005,1029,1036,1067,1071,1141,1158,1219,1246,1286,1396,1422,1434,1485,1512,1522,1532,1556,1561];
const pins = [96,100,122,126,143,184,188,193,248,263,321,305,326,355,369,411,481,529,569,596,605,611,629,641,662,693,738,823,826,832,842,877,932,956,960,974,1050,1078,1092,1174,1310,1334,1340,1345,1350,1356,1389,1392,1407,1425,1440,1446,1461,1507,1543,1551];
let marks = '';
stars.forEach(x => { marks += `M${x - 5} 138.500h10M${x} 133v11M${x - 4} 134.500l8 8M${x + 4} 134.500l-8 8`; });
add(price, 'path', { d: marks, stroke: '#bbb', 'stroke-width': 1 });
let dots = '';
stars.forEach(x => { dots += `M${x - 3} 135.500h6v6h-6z`; });
pins.forEach(x => { dots += `M${x} 132.500l3 4h-2v1h2v3h-2v1h2l-3 4-3-4h2v-1h-2v-3h2v-1h-2z`; });
add(price, 'path', { d: dots, fill: '#bbb' });
[478, 635, 1167].forEach(x => {
  add(price, 'path', { d: `M${x - 4} 666l4-4 4 4z`, fill: '#f00' });
  add(price, 'text', { x: x - 4, y: 676, fill: '#f00', 'font-size': 14, 'font-weight': 700, 'font-family': 'Liberation Mono, monospace' }, 'S');
});

// trend lines and pointers to the extremes
add(price, 'path', { d: 'M788 145L1568 285.500M595 678L1568 331', stroke: '#ff0', 'stroke-width': 2, fill: 'none', 'shape-rendering': 'crispEdges' });
add(price, 'path', { d: 'M869 164l-16-6m7 0l-7 0 4 5M168 653l-17 6m4-5l-4 5 7 0', stroke: '#fff', fill: 'none' });

// MACD
[708, 753, 796, 839, 882].forEach(y =>
  add(macd, 'path', { d: `M45 ${y + 0.5}H1568`, stroke: '#555', 'stroke-dasharray': '1 3' }));
scale('macdScale', 678, 207, [['8.04', 710], ['4.74', 755], ['1.65', 798], ['-1.44', 841], ['-4.60', 875]]);
const dif = [[45,823],[85,820],[100,813],[116,809],[130,811],[143,816],[155,823],[168,823],[174,821],[182,811],[192,805],[205,807],[225,810],[245,817],[260,822],[275,827],[290,822],[305,819],[325,813],[345,812],[365,812],[385,816],[405,821],[425,823],[455,820],[460,814],[468,800],[477,788],[485,791],[495,788],[510,778],[522,770],[530,752],[535,744],[551,744],[560,764],[575,795],[590,806],[600,820],[615,828],[628,824],[640,830],[648,826],[660,818],[672,824],[682,835],[697,838],[710,832],[725,830],[735,825],[745,809],[760,791],[773,786],[785,797],[800,804],[810,798],[820,786],[828,764],[835,735],[841,720],[846,719],[851,708],[857,720],[863,735],[872,738],[878,742],[885,770],[892,800],[898,815],[903,829],[910,824],[918,821],[925,825],[935,822],[943,812],[950,821],[955,843],[962,860],[972,876],[985,873],[990,875],[1000,864],[1015,858],[1028,861],[1040,860],[1050,852],[1062,846],[1073,852],[1085,845],[1095,832],[1105,824],[1115,801],[1122,788],[1133,786],[1143,777],[1155,785],[1165,788],[1178,791],[1187,800],[1193,817],[1198,824],[1208,821],[1215,818],[1225,800],[1240,788],[1247,797],[1258,798],[1268,783],[1275,770],[1285,781],[1295,784],[1310,783],[1320,790],[1330,812],[1342,820],[1350,832],[1358,846],[1370,849],[1382,851],[1392,849],[1400,842],[1412,830],[1425,812],[1435,806],[1445,800],[1458,795],[1470,798],[1485,802],[1500,798],[1515,803],[1528,807],[1545,816],[1555,823],[1562,822]];
const dea = [[45,822],[95,820],[120,812],[135,811],[148,813],[165,821],[178,821],[195,811],[215,808],[235,809],[250,812],[265,818],[280,824],[300,823],[320,817],[345,814],[370,812],[395,815],[420,821],[455,822],[468,812],[480,800],[500,789],[525,776],[540,758],[553,750],[565,760],[585,790],[605,808],[625,822],[645,827],[665,820],[680,828],[697,836],[720,832],[740,828],[760,808],[780,793],[795,797],[810,800],[825,787],[840,750],[857,728],[870,732],[885,748],[900,785],[915,808],[935,820],[948,818],[960,830],[975,858],[990,870],[1005,868],[1020,861],[1040,861],[1065,851],[1085,850],[1100,838],[1115,820],[1135,792],[1150,785],[1170,787],[1190,796],[1205,812],[1218,817],[1230,806],[1245,798],[1258,798],[1270,788],[1280,780],[1300,783],[1322,785],[1340,802],[1355,826],[1370,840],[1385,847],[1393,848],[1410,838],[1430,820],[1455,803],[1475,799],[1500,800],[1520,800],[1540,804],[1562,819]];
const hist = [[45,816],[70,817],[90,818],[95,814],[108,810],[118,815],[130,820],[145,825],[152,829],[165,822],[172,820],[180,806],[188,802],[200,811],[215,818],[235,822],[255,827],[270,828],[285,821],[300,817],[318,815],[340,815],[360,818],[380,822],[400,823],[430,821],[450,817],[460,804],[470,791],[485,802],[498,811],[515,806],[525,797],[533,784],[545,801],[552,815],[560,840],[573,860],[585,848],[600,846],[615,832],[630,824],[645,819],[655,810],[668,819],[680,834],[695,830],[705,815],[725,816],[735,808],[745,798],[760,795],[775,800],[785,822],[798,831],[810,822],[820,805],[828,790],[838,753],[848,768],[856,810],[866,832],[875,826],[884,865],[890,882],[900,880],[912,838],[925,830],[935,817],[943,808],[952,840],[960,865],[970,855],[985,830],[995,821],[1000,808],[1015,812],[1030,818],[1040,812],[1060,808],[1075,822],[1088,810],[1100,798],[1112,788],[1120,778],[1130,793],[1145,800],[1157,826],[1165,818],[1180,825],[1195,852],[1208,832],[1218,824],[1228,800],[1235,796],[1245,808],[1255,818],[1265,802],[1275,794],[1287,825],[1300,818],[1315,822],[1330,845],[1345,848],[1357,852],[1370,838],[1385,828],[1400,810],[1415,804],[1432,795],[1450,802],[1465,808],[1477,813],[1485,825],[1500,815],[1515,822],[1530,825],[1540,828],[1553,833],[1562,822]];
let up = '', down = '';
for (let x = 45.5; x < 1563; x += 3) {
  const y = Math.round(lerp(hist, x));
  if (y < 819) up += `M${x} 820V${y}`; else down += `M${x} 819V${y + 1}`;
}
add(macd, 'path', { d: up, stroke: '#ff4848', 'shape-rendering': 'crispEdges' });
add(macd, 'path', { d: down, stroke: '#00ffff', 'shape-rendering': 'crispEdges' });
const curve = pts => {
  let d = `M${pts[0]}`;
  for (let k = 1; k < pts.length; k++) {
    const [a, b] = [pts[k - 1], pts[k]];
    const p = pts[k - 2] || a, n = pts[k + 1] || b;
    d += `C${a[0] + (b[0] - p[0]) / 7} ${a[1] + (b[1] - p[1]) / 7} ${b[0] - (n[0] - a[0]) / 7} ${b[1] - (n[1] - a[1]) / 7} ${b}`;
  }
  return d;
};
add(macd, 'path', { d: curve(dif), stroke: '#fff', fill: 'none', 'shape-rendering': 'crispEdges' });
add(macd, 'path', { d: curve(dea), stroke: '#ff0', fill: 'none', 'shape-rendering': 'crispEdges' });

// dates
const host = document.getElementById('dates');
[[100,'2020'],[149,'02'],[209,'03'],[276,'04'],[340,'05'],[391,'06'],[451,'07'],[521,'08'],[585,'09'],[652,'10'],[700,'11'],[763,'12'],[833,'2021'],[893,'02'],[938,'03'],[1008,'04'],[1072,'05'],[1094,'2021/05/18/二'],[1256,'08'],[1321,'09'],[1380,'10'],[1427,'11'],[1499,'12']].forEach(([x, t]) => {
  const s = document.createElement('span');
  s.textContent = t;
  if (t.length === 4) s.className = 'year';
  if (t.length > 4) s.className = 'cursor';
  s.style.left = (x - 45) / 1523 * 100 + '%';
  host.appendChild(s);
});
```
